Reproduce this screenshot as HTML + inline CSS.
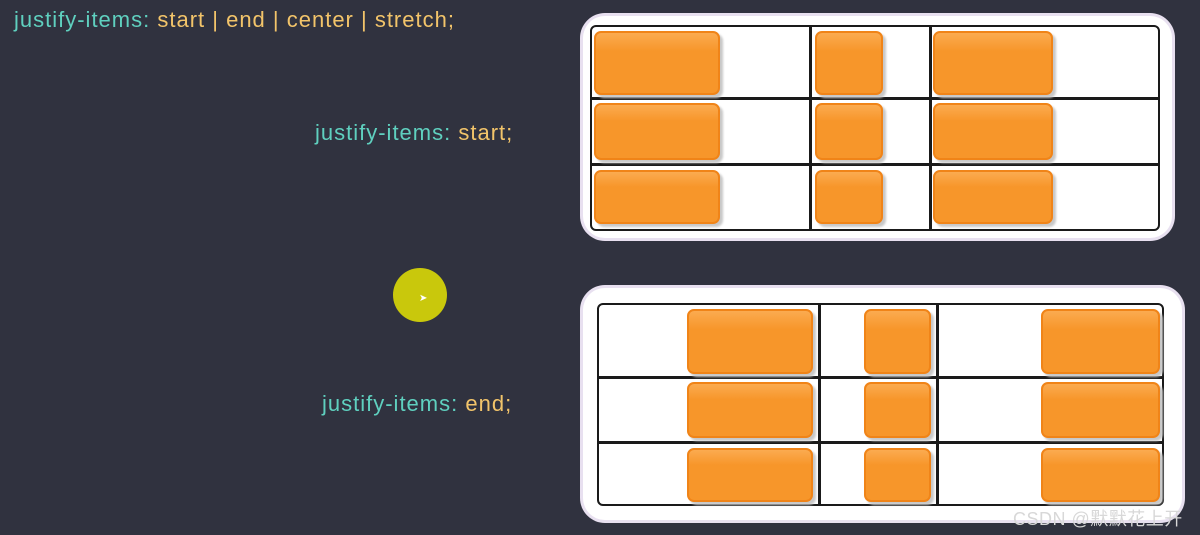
<!DOCTYPE html>
<html><head><meta charset="utf-8"><style>
body{margin:0;width:1200px;height:535px;background:#30323f;position:relative;overflow:hidden;font-family:"Liberation Sans","Noto Sans CJK SC",sans-serif}
.t{position:absolute;font-size:22px;letter-spacing:1px;color:#f2c46a;white-space:nowrap}
.t b{font-weight:normal;color:#5fd0bf}
.panel{position:absolute;background:#fff;border-radius:22px;box-shadow:0 0 0 3px #e8e0f0}
.grid{position:absolute;border:2.5px solid #1a1a1a;border-radius:6px;box-sizing:border-box}
.v{position:absolute;width:2.5px;background:#1a1a1a}
.h{position:absolute;height:2.5px;background:#1a1a1a}
.o{position:absolute;background:#f7962a;border:2px solid #f08418;border-radius:7px;box-sizing:border-box;box-shadow:3px 3px 2px #c8c8c8;background-image:linear-gradient(#fbab50,#f7962a 30%)}
</style></head><body>
<div class="t" style="left:14px;top:7px"><b>justify-items:</b> start | end | center | stretch;</div>
<div class="t" style="left:315px;top:120px"><b>justify-items:</b> start;</div>
<div class="t" style="left:322px;top:391px"><b>justify-items:</b> end;</div>

<div style="position:absolute;left:393px;top:268px;width:54px;height:54px;border-radius:50%;background:#c9c80c"></div>
<div style="position:absolute;left:419px;top:293px;font-size:10px;color:#fff">➤</div>

<div class="panel" style="left:583px;top:16px;width:589px;height:222px"></div>
<div class="grid" style="left:590px;top:25px;width:570px;height:206px"></div>
<div class="v" style="left:809px;top:25px;height:206px"></div>
<div class="v" style="left:929px;top:25px;height:206px"></div>
<div class="h" style="left:590px;top:97px;width:570px"></div>
<div class="h" style="left:590px;top:163px;width:570px"></div>
<div class="o" style="left:594px;top:31px;width:126px;height:64px"></div>
<div class="o" style="left:815px;top:31px;width:68px;height:64px"></div>
<div class="o" style="left:933px;top:31px;width:120px;height:64px"></div>
<div class="o" style="left:594px;top:103px;width:126px;height:57px"></div>
<div class="o" style="left:815px;top:103px;width:68px;height:57px"></div>
<div class="o" style="left:933px;top:103px;width:120px;height:57px"></div>
<div class="o" style="left:594px;top:170px;width:126px;height:54px"></div>
<div class="o" style="left:815px;top:170px;width:68px;height:54px"></div>
<div class="o" style="left:933px;top:170px;width:120px;height:54px"></div>

<div class="panel" style="left:583px;top:288px;width:599px;height:232px"></div>
<div class="grid" style="left:597px;top:303px;width:567px;height:203px"></div>
<div class="v" style="left:818px;top:303px;height:203px"></div>
<div class="v" style="left:936px;top:303px;height:203px"></div>
<div class="h" style="left:597px;top:376px;width:567px"></div>
<div class="h" style="left:597px;top:441px;width:567px"></div>
<div class="o" style="left:687px;top:309px;width:126px;height:65px"></div>
<div class="o" style="left:864px;top:309px;width:67px;height:65px"></div>
<div class="o" style="left:1041px;top:309px;width:119px;height:65px"></div>
<div class="o" style="left:687px;top:382px;width:126px;height:56px"></div>
<div class="o" style="left:864px;top:382px;width:67px;height:56px"></div>
<div class="o" style="left:1041px;top:382px;width:119px;height:56px"></div>
<div class="o" style="left:687px;top:448px;width:126px;height:54px"></div>
<div class="o" style="left:864px;top:448px;width:67px;height:54px"></div>
<div class="o" style="left:1041px;top:448px;width:119px;height:54px"></div>

<div style="position:absolute;left:1013px;top:505px;font-size:18px;letter-spacing:0.5px;color:#d8d8d8;white-space:nowrap">CSDN @默默花上开</div>
</body></html>
